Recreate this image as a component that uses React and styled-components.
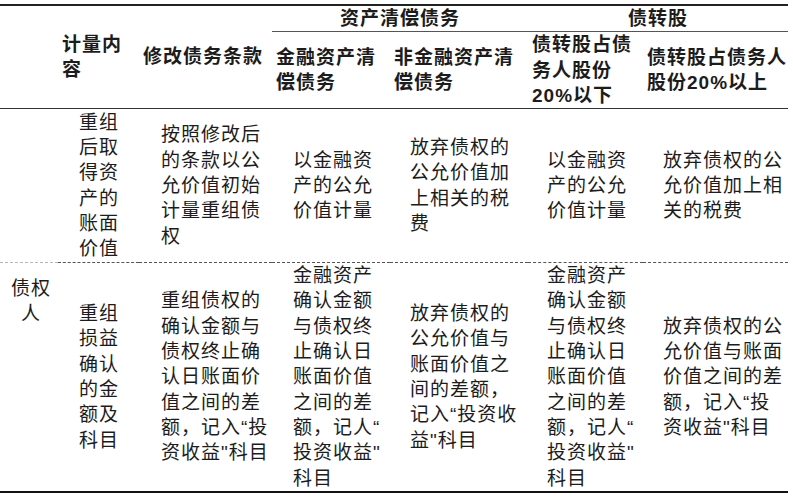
import React from "react";
import styled, { createGlobalStyle } from "styled-components";

const Global = createGlobalStyle`
  html, body { margin: 0; padding: 0; background: #fff; }
  body { font-family: "Liberation Sans", "Noto Sans CJK SC", sans-serif; }
`;

const Page = styled.div`
  padding-top: 4px;
  width: 793px;
`;

const Table = styled.table`
  border-collapse: collapse;
  table-layout: fixed;
  width: 788px;
  border-top: 2px solid #222;
  border-bottom: 2px solid #111;
  color: #1c1c1c;
  font-size: 19px;
  letter-spacing: 1px;
  line-height: 25.3px;
`;

const Row = styled.tr`
  height: ${(p) => p.$h}px;
`;

const Head = styled.th`
  font-weight: 700;
  text-align: ${(p) => (p.$center ? "center" : "left")};
  vertical-align: middle;
  padding: 0 0 0 ${(p) => (p.$center ? 0 : 4)}px;
  white-space: nowrap;
  border-bottom: ${(p) =>
    p.$group ? "1.5px solid #555" : p.$last ? "1px solid #333" : "none"};
`;

const Cell = styled.td`
  vertical-align: ${(p) => (p.$top ? "top" : "middle")};
  text-align: ${(p) => (p.$center ? "center" : "left")};
  padding: ${(p) => p.$pt || 0}px 0 0 ${(p) => p.$pl}px;
  white-space: nowrap;
  border-bottom: ${(p) =>
    p.$sep === "light"
      ? "1px dashed #b8b8b8"
      : p.$sep === "dark"
      ? "1.5px dashed #555"
      : "none"};
`;

const Lines = ({ lines }) =>
  lines.map((l, i) => (
    <React.Fragment key={i}>
      {i > 0 && <br />}
      {l}
    </React.Fragment>
  ));

const widths = [58, 81, 133, 118, 138, 115, 145];
const bodyPad = [0, 21, 22, 21, 20, 19, 20];

const row1 = [
  ["重组", "后取", "得资", "产的", "账面", "价值"],
  ["按照修改后", "的条款以公", "允价值初始", "计量重组债", "权"],
  ["以金融资", "产的公允", "价值计量"],
  ["放弃债权的", "公允价值加", "上相关的税", "费"],
  ["以金融资", "产的公允", "价值计量"],
  ["放弃债权的公", "允价值加上相", "关的税费"],
];

const equityLines = [
  "金融资产",
  "确认金额",
  "与债权终",
  "止确认日",
  "账面价值",
  "之间的差",
  "额，记人“",
  "投资收益\"",
  "科目",
];

const row2 = [
  ["重组", "损益", "确认", "的金", "额及", "科目"],
  [
    "重组债权的",
    "确认金额与",
    "债权终止确",
    "认日账面价",
    "值之间的差",
    "额，记入“投",
    "资收益\"科目",
  ],
  equityLines,
  ["放弃债权的", "公允价值与", "账面价值之", "间的差额，", "记入“投资收", "益\"科目"],
  equityLines,
  ["放弃债权的公", "允价值与账面", "价值之间的差", "额，记入“投", "资收益\"科目"],
];

export default function App() {
  return (
    <Page>
      <Global />
      <Table>
        <colgroup>
          {widths.map((w, i) => (
            <col key={i} style={{ width: w }} />
          ))}
        </colgroup>
        <thead>
          <Row $h={26}>
            <Head rowSpan={2} $last />
            <Head rowSpan={2} $last>
              <Lines lines={["计量内", "容"]} />
            </Head>
            <Head rowSpan={2} $last>
              修改债务条款
            </Head>
            <Head colSpan={2} $center $group>
              资产清偿债务
            </Head>
            <Head colSpan={2} $center $group>
              债转股
            </Head>
          </Row>
          <Row $h={76}>
            <Head $last>
              <Lines lines={["金融资产清", "偿债务"]} />
            </Head>
            <Head $last>
              <Lines lines={["非金融资产清", "偿债务"]} />
            </Head>
            <Head $last>
              <Lines lines={["债转股占债", "务人股份", "20%以下"]} />
            </Head>
            <Head $last>
              <Lines lines={["债转股占债务人", "股份20%以上"]} />
            </Head>
          </Row>
        </thead>
        <tbody>
          <Row $h={154}>
            <Cell $pl={0} $sep="light" />
            {row1.map((lines, i) => (
              <Cell key={i} $pl={bodyPad[i + 1]} $sep="dark">
                <Lines lines={lines} />
              </Cell>
            ))}
          </Row>
          <Row $h={228}>
            <Cell $pl={4} $center $top $pt={13}>
              <Lines lines={["债权", "人"]} />
            </Cell>
            {row2.map((lines, i) => (
              <Cell key={i} $pl={bodyPad[i + 1]}>
                <Lines lines={lines} />
              </Cell>
            ))}
          </Row>
        </tbody>
      </Table>
    </Page>
  );
}
